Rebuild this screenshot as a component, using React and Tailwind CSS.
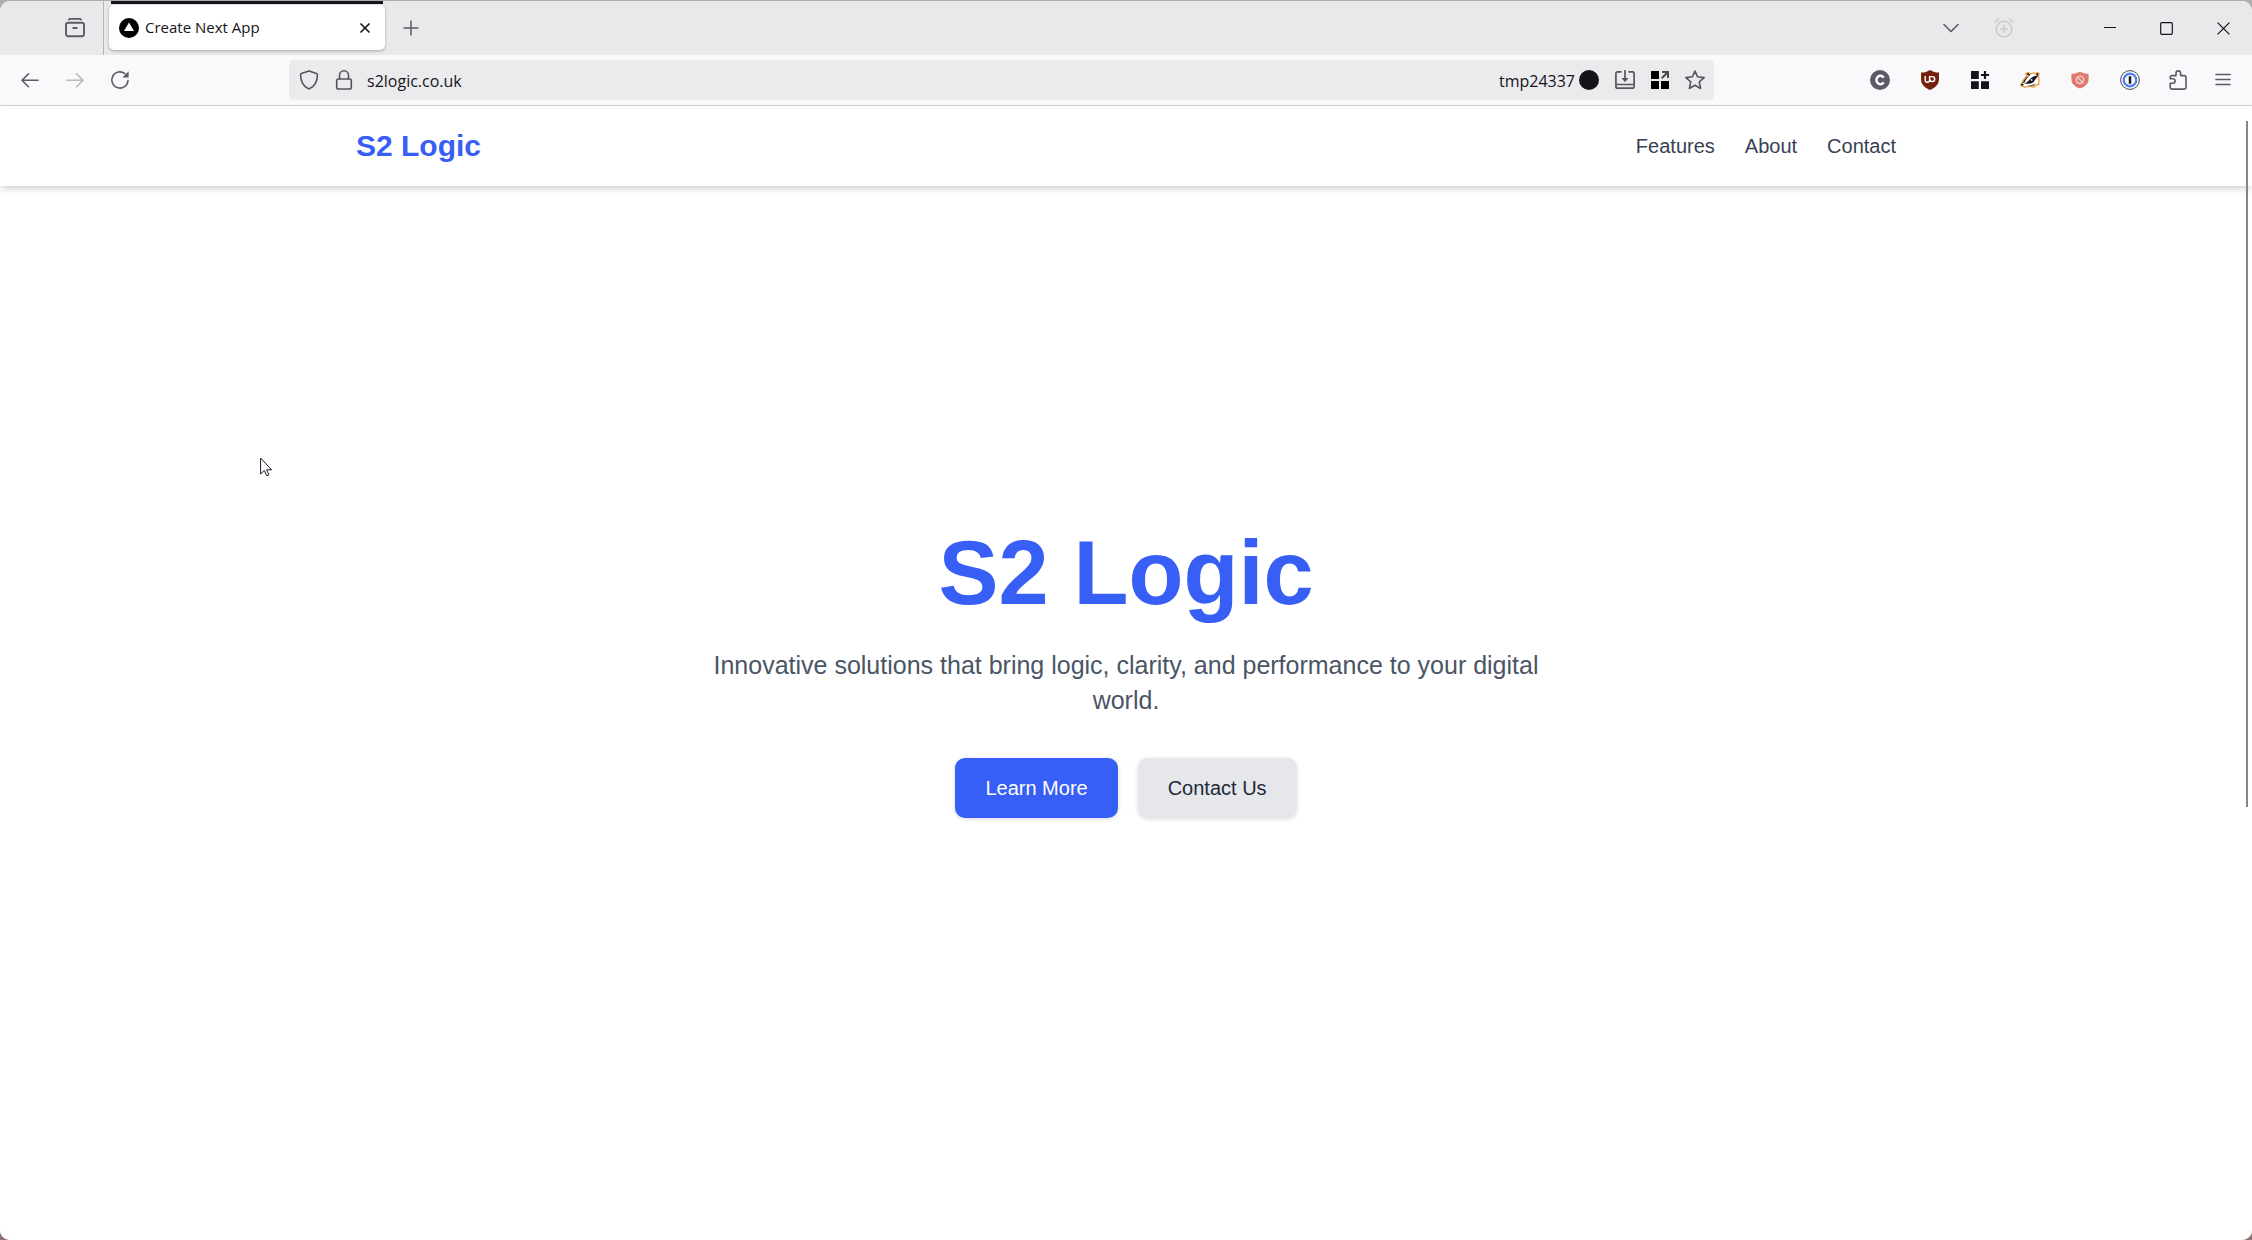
import React from 'react';

const Icon = ({ size = 20, children, ...props }) => (
  <svg width={size} height={size} viewBox={`0 0 ${size} ${size}`} fill="none" aria-hidden="true" {...props}>
    {children}
  </svg>
);

const line = {
  stroke: 'currentColor',
  strokeWidth: 1.6,
  strokeLinecap: 'round',
  strokeLinejoin: 'round',
};

const RecentTabsIcon = () => (
  <Icon stroke="currentColor" strokeLinecap="round">
    <path d="M3.8 1.6C4.2 1.1 4.8.9 5.5.9h9c.7 0 1.3.2 1.7.7" strokeWidth="1.7" />
    <rect x="1" y="4.8" width="18" height="13.400" rx="2.2" strokeWidth="1.9" />
    <path d="M8.200 10h3.600" strokeWidth="1.8" />
  </Icon>
);

const FaviconIcon = () => (
  <Icon>
    <circle cx="10" cy="10" r="10" fill="#000" />
    <path d="M10 4.6 15 13H5z" fill="#fff" />
  </Icon>
);

const BackIcon = () => (
  <Icon {...line}>
    <path d="M18 10.3H2M8.500 3.800 2 10.300l6.500 6.500" />
  </Icon>
);

const ForwardIcon = () => (
  <Icon {...line}>
    <path d="M2 10.300h16M11.500 3.800l6.500 6.500-6.500 6.500" />
  </Icon>
);

const ReloadIcon = () => (
  <Icon {...line}>
    <path d="M18 10.600A8.100 8.100 0 1 1 14.900 3.600" />
    <path d="M18.600 1.200v6.200h-6.200z" fill="currentColor" stroke="none" />
  </Icon>
);

const ShieldIcon = () => (
  <Icon {...line}>
    <path d="M10 .9 17.600 3.600c.5.2.8.6.8 1.100C18.400 11.400 15.600 16.500 10 19 4.400 16.500 1.600 11.400 1.600 4.700c0-.5.3-.9.8-1.100z" />
  </Icon>
);

const LockIcon = () => (
  <Icon {...line}>
    <rect x="2.700" y="9" width="14.600" height="10" rx="1.800" />
    <path d="M5.500 9V5.300a4.500 4.500 0 0 1 9 0V9" />
  </Icon>
);

const SaveIcon = () => (
  <Icon stroke="currentColor" strokeWidth="1.700" strokeLinecap="round">
    <path d="M6 1.800H2.600A1.700 1.700 0 0 0 .9 3.500v13A1.700 1.700 0 0 0 2.600 18.200h14.800a1.700 1.700 0 0 0 1.700-1.700v-13a1.700 1.700 0 0 0-1.700-1.700H14M1 14.500h18M10 .8v9" />
    <path d="M6.300 8h7.400L10 12z" fill="currentColor" stroke="none" />
  </Icon>
);

const GridOpenIcon = () => (
  <Icon>
    <path d="M1 1h8v8H1zM1 11h8v8H1zM11 11h8v8h-8z" fill="#000" />
    <path d="M11.700 8.300l5.300-5.300M12 2h6v6" stroke="#4a4a4f" strokeWidth="2" />
  </Icon>
);

const GridAddIcon = () => (
  <Icon>
    <path d="M1 1h7.800v8H1zM1 11.200h7.800v7.800H1zM11 11.200h8v7.800h-8z" fill="#15141a" />
    <path d="M15 1v8M11 5h8" stroke="#15141a" strokeWidth="2.200" />
  </Icon>
);

const StarIcon = () => (
  <Icon {...line}>
    <path d="M10 1.100l2.600 5.700 6.500.8-4.800 4.200 1.300 6.700L10 15.300l-5.600 3.200 1.300-6.700L.9 7.600l6.500-.8z" />
  </Icon>
);

const ContainerIcon = () => (
  <Icon>
    <circle cx="10" cy="10" r="10" fill="#5b5b66" />
    <path d="M13.600 7.700A3.900 4.200 0 1 0 13.600 12.300" stroke="#fff" strokeWidth="2.500" />
  </Icon>
);

const BlockerIcon = () => (
  <Icon>
    <path d="M10 0c2.600 1.700 5.500 2.600 9 2.600V9c0 6-4.500 9-9 11-4.500-2-9-5-9-11V2.600C4.500 2.600 7.400 1.700 10 0z" fill="#75200c" />
    <path d="M5.200 6v4a2.200 2.200 0 0 0 4.400 0V6" stroke="#fff" strokeWidth="1.400" />
    <path d="M9.600 6.600h2.600a2.500 2.500 0 1 1-2.500 2.500" stroke="#fff" strokeWidth="1.400" />
  </Icon>
);

const BadgerIcon = () => (
  <Icon>
    <path
      d="M.6 15.400C2 12 4.200 8.500 6.800 6L5.800 3.600 8.200 2.400l1.800 1.500c2-.8 4-1 5.800-.6l2-.8 1.200 1.300-.6 2.700.8 3.500-.8 2.200.6 2.300-2.600.3-2.400 2.400-4-1-5 .9z"
      fill="#fff"
      stroke="#ee9a3a"
      strokeWidth="1.300"
      strokeLinejoin="round"
    />
    <path d="M2.600 13.200C4 10 6 7.300 8.800 5.400L6.400 4l1.700-.9 2.200 1.600C7.600 7 5.600 9.600 4.600 12.600z" fill="#161616" />
    <path d="M4.200 13.800c2.200-1 3.800-2.200 5.200-4 2-2.400 4-3.800 7-4.400l1.800 1.400c-2 1-2.600 2.400-3.600 4-1.500 2.200-3.400 2.900-6 2.900z" fill="#161616" />
    <path d="M15.600 4l2.200-.8.7.9-.8 2zM.8 15.200l1.500-2 1.500 1.200-1 1.300z" fill="#161616" />
    <path d="M5 15.800c3 .3 5.500-.1 7.500-1.300l3-1.200-1.500 2.500-3.400.4z" fill="#3a332c" opacity=".7" />
    <circle cx="11.600" cy="9.900" r=".9" fill="#fff" />
  </Icon>
);

const AdShieldIcon = () => (
  <Icon>
    <path d="M10 1.500c2.500 1.600 5.300 2.300 8.600 2.300V9c0 4.800-3.500 7.700-8.600 9.500C4.900 16.700 1.400 13.800 1.400 9V3.800c3.300 0 6.100-.7 8.600-2.300z" fill="#de796f" />
    <circle cx="10" cy="9.800" r="3.700" stroke="#f7d3cf" strokeWidth="1.300" />
    <path d="M7.500 7.300l5 5" stroke="#f7d3cf" strokeWidth="1.300" />
  </Icon>
);

const PasswordIcon = () => (
  <Icon>
    <circle cx="10" cy="10" r="9.400" fill="#fff" stroke="#4a4a4f" strokeWidth="1" />
    <circle cx="10" cy="10" r="6.300" stroke="#5583f2" strokeWidth="2.400" />
    <path d="M10 6.300v7.400" stroke="#15141a" strokeWidth="2.500" />
  </Icon>
);

const PuzzleIcon = () => (
  <Icon {...line}>
    <path d="M2.200 13.200v4.400c0 .9.700 1.500 1.600 1.500h12.600a1.600 1.600 0 0 0 1.600-1.600V7.200a1.600 1.600 0 0 0-1.600-1.600h-3.800V3.200a2.300 2.300 0 0 0-4.600 0v2.400H3.800a1.600 1.600 0 0 0-1.600 1.600v1.600h2.700a2.200 2.200 0 0 1 0 4.400z" />
  </Icon>
);

const MenuIcon = () => (
  <Icon {...line}>
    <path d="M3 4.500h14M3 9.500h14M3 14.500h14" />
  </Icon>
);

const AlarmIcon = () => (
  <Icon {...line}>
    <circle cx="10" cy="11" r="7.800" />
    <path d="M10 7.500v7M6.500 11h7M1.500 4c.5-1.400 1.500-2.400 3-3M18.500 4c-.5-1.400-1.500-2.400-3-3" />
  </Icon>
);

const extensions = [
  { label: 'Account containers', icon: <ContainerIcon /> },
  { label: 'Content blocker', icon: <BlockerIcon /> },
  { label: 'Add to grid', icon: <GridAddIcon /> },
  { label: 'Tracker badger', icon: <BadgerIcon /> },
  { label: 'Ad shield', icon: <AdShieldIcon /> },
  { label: 'Passwords', icon: <PasswordIcon /> },
];

const navLinks = ['Features', 'About', 'Contact'];

function IconButton({ label, className = '', children }) {
  return (
    <button type="button" aria-label={label} className={`flex shrink-0 items-center justify-center ${className}`}>
      {children}
    </button>
  );
}

function TabBar() {
  return (
    <div className="flex h-[54px] bg-[#e9e9eb] text-[#5b5b66]">
      <IconButton label="Recent browsing" className="ml-[47px] w-14">
        <RecentTabsIcon />
      </IconButton>
      <div className="w-px bg-[#b4b4b8]" />

      {/* Active tab */}
      <div className="ml-[5px] flex w-[276px] flex-col">
        <div className="mx-0.5 h-[3px] bg-[#15141a]" />
        <div className="mt-px flex h-[45px] items-center rounded-[5px] bg-white pr-2 pl-2.5 text-[#15141a] shadow-[0_1px_3px_rgba(0,0,0,0.3)]">
          <FaviconIcon />
          <span className="ml-1.5 flex-1 text-[15px]">Create Next App</span>
          <IconButton label="Close tab" className="size-6">
            <Icon size={12} stroke="currentColor" strokeWidth="1.600">
              <path d="M1.500 1.500l9 9M10.500 1.500l-9 9" />
            </Icon>
          </IconButton>
        </div>
      </div>

      <IconButton label="New tab" className="ml-1.5 w-10">
        <Icon size={16} stroke="currentColor" strokeWidth="1.500">
          <path d="M8 .5v15M.5 8h15" />
        </Icon>
      </IconButton>

      <div className="ml-auto flex">
        <IconButton label="List all tabs" className="w-[53px]">
          <Icon size={16} {...line}>
            <path d="M1 4.500l7 7 7-7" />
          </Icon>
        </IconButton>
        <IconButton label="Snooze tab" className="mr-[51px] w-[53px] text-[#cbcbcd]">
          <AlarmIcon />
        </IconButton>
        <div className="flex text-[#15141a]">
          <IconButton label="Minimize" className="w-[57px]">
            <Icon size={12} stroke="currentColor">
              <path d="M0 5.500h12" />
            </Icon>
          </IconButton>
          <IconButton label="Maximize" className="w-[57px]">
            <Icon size={13} stroke="currentColor" strokeWidth="1.200">
              <rect x=".7" y=".7" width="11.600" height="11.600" rx="1" />
            </Icon>
          </IconButton>
          <IconButton label="Close window" className="w-[57px]">
            <Icon size={13} stroke="currentColor" strokeWidth="1.200">
              <path d="M.6.6l11.800 11.800M12.400.6L.6 12.400" />
            </Icon>
          </IconButton>
        </div>
      </div>
    </div>
  );
}

function Toolbar() {
  return (
    <div className="flex h-[51px] items-center border-b border-[#cccccf] bg-[#f9f9fb] px-[7px] text-[#5b5b66]">
      <IconButton label="Back" className="h-10 w-[45px]">
        <BackIcon />
      </IconButton>
      <IconButton label="Forward" className="h-10 w-[45px] text-[#b9b9be]">
        <ForwardIcon />
      </IconButton>
      <IconButton label="Reload" className="h-10 w-[45px]">
        <ReloadIcon />
      </IconButton>

      {/* Address bar */}
      <div className="mr-[141px] ml-[147px] flex h-10 flex-1 items-center rounded-[5px] bg-[#ebebed] px-0.5 text-[#55555c]">
        <IconButton label="Tracking protection" className="h-10 w-[35px]">
          <ShieldIcon />
        </IconButton>
        <IconButton label="Site information" className="h-10 w-[35px]">
          <LockIcon />
        </IconButton>
        <input
          type="text"
          aria-label="Address"
          defaultValue="s2logic.co.uk"
          className="ml-1.5 min-w-0 flex-1 bg-transparent pt-0.5 text-base text-[#15141a] outline-none"
        />
        <span className="mr-1 pt-0.5 text-base text-[#15141a]">tmp24337</span>
        <span className="mr-2 size-5 rounded-full bg-[#15141a]" />
        <IconButton label="Save page" className="h-10 w-[35px]">
          <SaveIcon />
        </IconButton>
        <IconButton label="Open in grid" className="h-10 w-[35px]">
          <GridOpenIcon />
        </IconButton>
        <IconButton label="Bookmark this page" className="h-10 w-[35px]">
          <StarIcon />
        </IconButton>
      </div>

      {extensions.map((ext) => (
        <IconButton key={ext.label} label={ext.label} className="h-10 w-[50px]">
          {ext.icon}
        </IconButton>
      ))}
      <IconButton label="Extensions" className="h-10 w-[45px]">
        <PuzzleIcon />
      </IconButton>
      <IconButton label="Open menu" className="h-10 w-[45px]">
        <MenuIcon />
      </IconButton>
    </div>
  );
}

function SiteHeader() {
  return (
    <header className="bg-white shadow-[0_5px_8px_-1px_rgba(0,0,0,0.1),0_3px_5px_-2px_rgba(0,0,0,0.1)]">
      <div className="mx-auto flex max-w-[1600px] items-center justify-between px-[30px] py-5">
        <a href="#top" className="text-[30px] leading-10 font-bold text-[#375ef5]">
          S2 Logic
        </a>
        <nav className="flex gap-[30px] text-xl leading-[30px] text-[#364153]">
          {navLinks.map((item) => (
            <a key={item} href={`#${item.toLowerCase()}`}>
              {item}
            </a>
          ))}
        </nav>
      </div>
    </header>
  );
}

function Hero() {
  return (
    <main className="flex flex-1 flex-col items-center justify-center px-5 pb-20 text-center">
      <h1 className="mb-[30px] text-[90px] leading-[90px] font-bold text-[#375ef5]">S2 Logic</h1>
      <p className="mb-10 max-w-[840px] text-[25px] leading-[35px] text-[#4a5565]">
        Innovative solutions that bring logic, clarity, and performance to your digital world.
      </p>
      <div className="flex gap-5 text-xl leading-[30px]">
        <button
          type="button"
          className="rounded-[10px] bg-[#375ef5] px-[30px] py-[15px] text-white shadow-[0_1px_4px_rgba(0,0,0,0.15)]"
        >
          Learn More
        </button>
        <button
          type="button"
          className="rounded-[10px] bg-[#e5e7eb] px-[30px] py-[15px] text-[#1e2939] shadow-[0_1px_4px_rgba(0,0,0,0.15)]"
        >
          Contact Us
        </button>
      </div>
    </main>
  );
}

export default function App() {
  return (
    <div className="flex min-h-screen flex-col bg-linear-to-b from-[#b0adb0] to-[#8c7474] pt-px">
      <div className="flex flex-1 flex-col overflow-hidden rounded-[10px] bg-white">
        <div className="font-['Open_Sans','Noto_Sans',sans-serif]">
          <TabBar />
          <Toolbar />
        </div>

        <div
          id="top"
          className="relative flex flex-1 flex-col bg-white font-['Liberation_Sans',Arial,sans-serif]"
        >
          <SiteHeader />
          <Hero />

          {/* Overlay scrollbar */}
          <div className="absolute top-[15px] right-1 h-[60.5%] w-0.5 bg-[#858585]" />

          {/* Mouse pointer */}
          <svg
            className="absolute top-[351px] left-[260px]"
            width="13"
            height="20"
            viewBox="0 0 13 20"
            aria-hidden="true"
          >
            <path
              d="M.6 1v16l3.700-3.500 2.400 5.300 2.200-1-2.300-5h5z"
              fill="#fff"
              stroke="#1b1b2a"
              strokeWidth="1"
            />
          </svg>
        </div>
      </div>
    </div>
  );
}
